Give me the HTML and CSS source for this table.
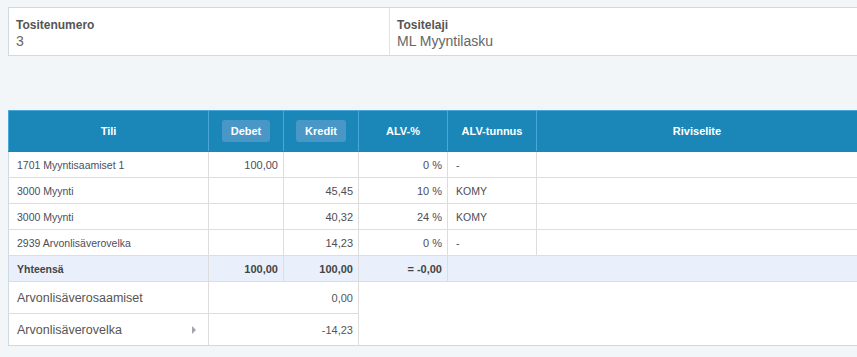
FILE: index.html
```html
<!DOCTYPE html>
<html>
<head>
<meta charset="utf-8">
<link rel="stylesheet" href="styles.css">
</head>
<body>
<div class="page">
  <div class="info-card">
    <div class="info-cell info-cell-num">
      <div class="info-label">Tositenumero</div>
      <div class="info-value">3</div>
    </div>
    <div class="info-cell info-cell-type">
      <div class="info-label">Tositelaji</div>
      <div class="info-value">ML Myyntilasku</div>
    </div>
  </div>

  <table class="entries">
    <colgroup>
      <col class="c-account">
      <col class="c-amount">
      <col class="c-amount">
      <col class="c-vat">
      <col class="c-vat">
      <col class="c-desc">
    </colgroup>
    <thead>
      <tr>
        <th>Tili</th>
        <th><span class="hbtn">Debet</span></th>
        <th><span class="hbtn">Kredit</span></th>
        <th>ALV-%</th>
        <th>ALV-tunnus</th>
        <th>Riviselite</th>
      </tr>
    </thead>
    <tbody>
      <tr class="row">
        <td>1701 Myyntisaamiset 1</td>
        <td class="num">100,00</td>
        <td class="num"></td>
        <td class="num">0 %</td>
        <td>-</td>
        <td></td>
      </tr>
      <tr class="row">
        <td>3000 Myynti</td>
        <td class="num"></td>
        <td class="num">45,45</td>
        <td class="num">10 %</td>
        <td>KOMY</td>
        <td></td>
      </tr>
      <tr class="row">
        <td>3000 Myynti</td>
        <td class="num"></td>
        <td class="num">40,32</td>
        <td class="num">24 %</td>
        <td>KOMY</td>
        <td></td>
      </tr>
      <tr class="row">
        <td>2939 Arvonlisäverovelka</td>
        <td class="num"></td>
        <td class="num">14,23</td>
        <td class="num">0 %</td>
        <td>-</td>
        <td></td>
      </tr>
      <tr class="row total">
        <td>Yhteensä</td>
        <td class="num">100,00</td>
        <td class="num">100,00</td>
        <td class="num">= -0,00</td>
        <td colspan="2"></td>
      </tr>
      <tr class="vat-row">
        <td>Arvonlisäverosaamiset</td>
        <td class="num" colspan="2">0,00</td>
        <td class="blank" colspan="3" rowspan="2"></td>
      </tr>
      <tr class="vat-row">
        <td><div class="vat-label"><span>Arvonlisäverovelka</span><span class="caret"></span></div></td>
        <td class="num" colspan="2">-14,23</td>
      </tr>
    </tbody>
  </table>
</div>
</body>
</html>
```
FILE: styles.css
```css
html, body {
  margin: 0;
  padding: 0;
  background: #f3f6f9;
  overflow: hidden;
}
body {
  font-family: "Liberation Sans", Arial, sans-serif;
  color: #555;
}
.page {
  padding: 7px 0 0 8px;
  width: 850px;
}
.info-card {
  display: flex;
  background: #fff;
  border: 1px solid #cfd9e2;
  height: 47px;
}
.info-cell {
  padding: 9px 8px 0 7px;
}
.info-cell-num {
  width: 365px;
  border-right: 1px solid #dde3e8;
}
.info-cell-type {
  flex: 1;
}
.info-label {
  font-size: 12px;
  font-weight: bold;
  color: #555;
  line-height: 16px;
}
.info-value {
  font-size: 14px;
  color: #666;
  line-height: 16px;
}
.entries {
  margin-top: 54px;
  width: 850px;
  table-layout: fixed;
  border-collapse: collapse;
  background: #fff;
  font-size: 10.5px;
}
.c-account { width: 200px; }
.c-amount { width: 75px; }
.c-vat { width: 89px; }
.entries th {
  background: #1b87b8;
  color: #fff;
  font-weight: bold;
  font-size: 11px;
  height: 40px;
  padding: 0;
  border: 1px solid #4ba7d8;
  border-bottom: 1px solid #1b87b8;
  text-align: center;
}
.hbtn {
  display: inline-block;
  background: #4897c6;
  border-radius: 3px;
  padding: 0 9px;
  line-height: 22px;
}
.entries td {
  border: 1px solid #dddddd;
  padding: 0 8px;
  height: 25px;
  color: #4d4d5a;
  white-space: nowrap;
}
.entries td.num {
  text-align: right;
  padding-right: 5px;
  font-size: 11px;
}
.entries tr.row td:first-child,
.entries tr.vat-row td:first-child {
  border-left-color: #cfd9e2;
}
.total td {
  background: #e9f0fb;
  font-weight: bold;
  color: #444;
}
.vat-row td {
  height: 31px;
  font-size: 12.5px;
  color: #555;
}
.vat-row td.num {
  font-size: 11px;
}
.vat-row:last-child td {
  border-bottom-color: #cfd9e2;
}
.vat-row td.blank {
  border-bottom-color: #cfd9e2;
}
.vat-label {
  display: flex;
  align-items: center;
  justify-content: space-between;
  padding-right: 4px;
}
.caret {
  width: 0;
  height: 0;
  border-top: 4px solid transparent;
  border-bottom: 4px solid transparent;
  border-left: 4px solid #a0a7ae;
}
```
